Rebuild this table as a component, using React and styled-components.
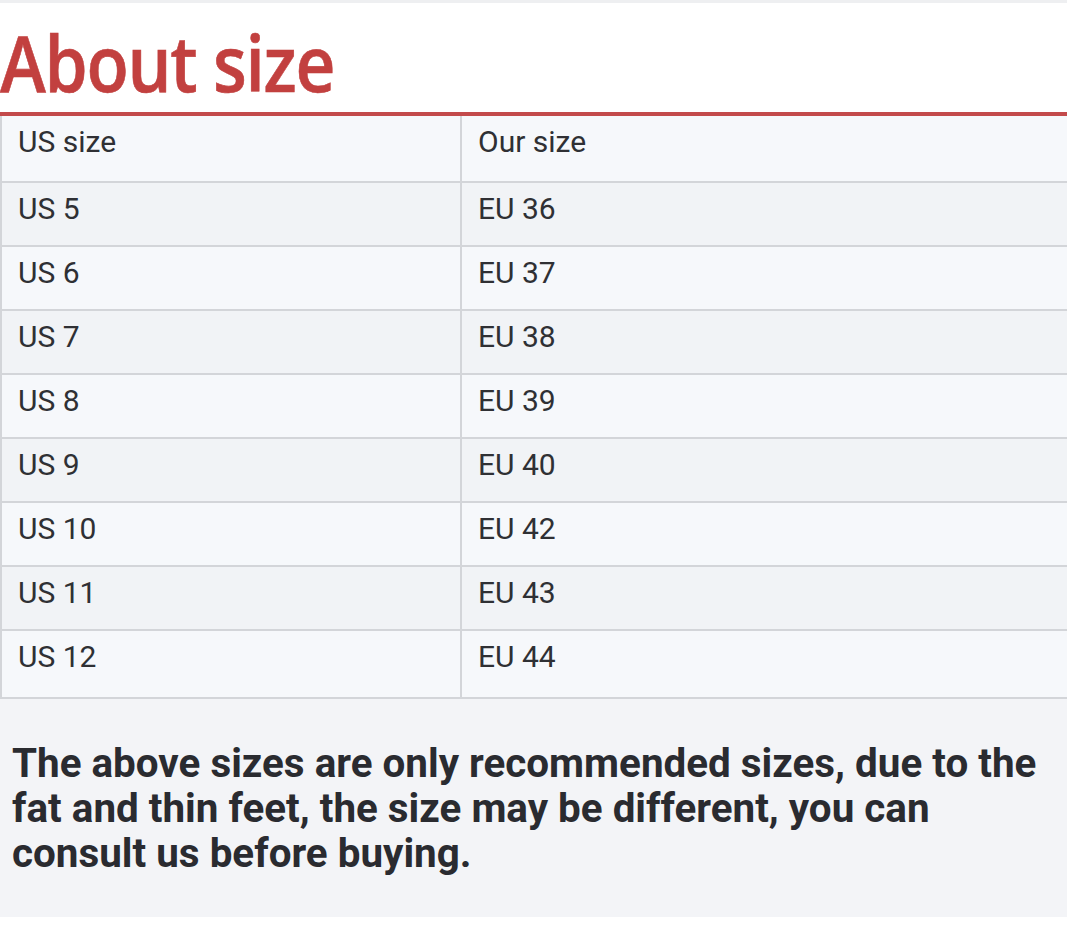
import React from "react";
import styled, { createGlobalStyle } from "styled-components";

const GlobalStyle = createGlobalStyle`
  html, body {
    margin: 0;
    padding: 0;
    background: #ffffff;
  }
  body {
    font-family: Roboto, "Liberation Sans", sans-serif;
  }
`;

const rows = [
  ["US 5", "EU 36"],
  ["US 6", "EU 37"],
  ["US 7", "EU 38"],
  ["US 8", "EU 39"],
  ["US 9", "EU 40"],
  ["US 10", "EU 42"],
  ["US 11", "EU 43"],
  ["US 12", "EU 44"],
];

class App extends React.Component {
  render() {
    return (
      <Page>
        <GlobalStyle />
        <TopRule />
        <TitleBar>
          <Title>About size</Title>
        </TitleBar>
        <SizeTable>
          <tbody>
            <Row $head>
              <Cell>US size</Cell>
              <Cell>Our size</Cell>
            </Row>
            {rows.map(([us, eu], i) => (
              <Row key={us} $alt={i % 2 === 0} $last={i === rows.length - 1}>
                <Cell>{us}</Cell>
                <Cell>{eu}</Cell>
              </Row>
            ))}
          </tbody>
        </SizeTable>
        <Note>
          <p>
            The above sizes are only recommended sizes, due to the fat and thin
            feet, the size may be different, you can consult us before buying.
          </p>
        </Note>
      </Page>
    );
  }
}

const Page = styled.div`
  width: 1067px;
  height: 927px;
  overflow: hidden;
  background: #ffffff;
`;

const TopRule = styled.div`
  height: 3px;
  background: #eeeff1;
`;

const TitleBar = styled.div`
  height: 113px;
  padding-top: 19px;
  box-sizing: border-box;
  border-bottom: 4px solid #c34a4b;
`;

const Title = styled.h1`
  margin: 0;
  display: inline-block;
  font-family: "Open Sans", "Noto Sans", sans-serif;
  font-weight: 600;
  font-size: 78px;
  line-height: 80px;
  letter-spacing: -1.5px;
  color: #c2403f;
  white-space: nowrap;
  transform: scaleX(0.89);
  transform-origin: left center;
  -webkit-text-stroke: 0.6px #c2403f;
`;

const SizeTable = styled.table`
  width: 1069px;
  border-collapse: collapse;
  table-layout: fixed;
`;

const Row = styled.tr`
  height: ${(p) => (p.$head ? "66px" : p.$last ? "68px" : "64px")};
  background: ${(p) => (p.$alt ? "#f1f3f6" : "#f6f8fb")};
  td {
    border-top: ${(p) => (p.$head ? "none" : "2px solid #d3d5d9")};
    border-bottom: ${(p) => (p.$last ? "2px solid #d3d5d9" : "none")};
  }
`;

const Cell = styled.td`
  vertical-align: top;
  padding: 10px 16px 0 16px;
  font-size: 30px;
  line-height: 32px;
  color: #2f3034;
  border-left: 2px solid #d3d5d9;
  &:first-child {
    width: 426px;
  }
`;

const Note = styled.div`
  background: #f3f4f7;
  height: 218px;
  padding: 42px 8px 0 12px;
  box-sizing: border-box;
  p {
    margin: 0;
    font-family: Roboto, "Liberation Sans", sans-serif;
    font-weight: 700;
    font-size: 40.4px;
    line-height: 45px;
    color: #2a2b30;
  }
`;

export default App;
